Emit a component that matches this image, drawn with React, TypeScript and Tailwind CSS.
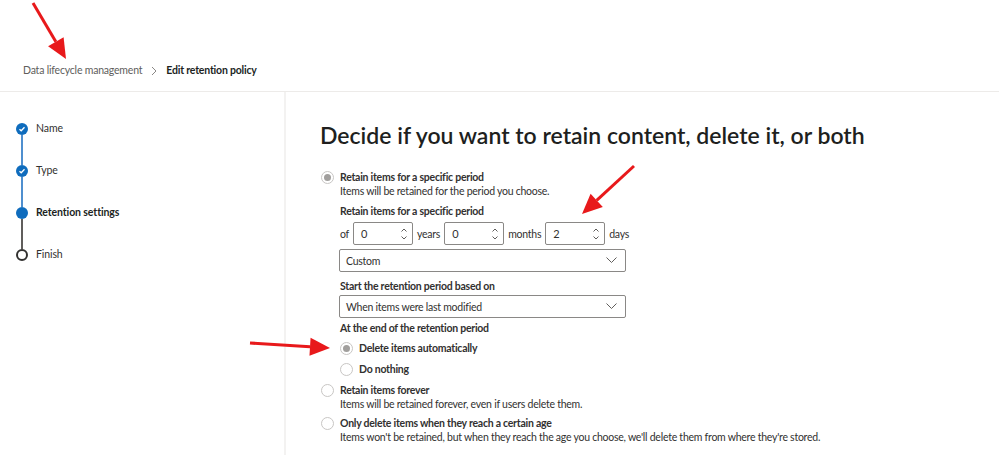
import React from "react";

const font = { fontFamily: 'Lato, "Open Sans", sans-serif' };

function Radio({ checked }: { checked?: boolean }) {
  return (
    <span className="flex h-[13px] w-[13px] shrink-0 items-center justify-center rounded-full border border-[#c8c6c4] bg-white">
      {checked && <span className="h-[7px] w-[7px] rounded-full bg-[#a19f9d]" />}
    </span>
  );
}

function Spin({ value }: { value: string }) {
  return (
    <div className="flex h-[23px] w-[60px] items-center justify-between rounded-[2px] border border-[#8a8886] bg-white pl-[7px] pr-[4px]">
      <span className="text-[11px] text-[#323130]">{value}</span>
      <svg width="8" height="16" viewBox="0 0 8 16" fill="none" stroke="#605e5c" strokeWidth="1">
        <path d="M1.5 5.5 L4 3 L6.5 5.5" />
        <path d="M1.5 10.5 L4 13 L6.5 10.5" />
      </svg>
    </div>
  );
}

function Select({ text }: { text: string }) {
  return (
    <div className="flex h-[23px] w-[287px] items-center justify-between rounded-[2px] border border-[#8a8886] bg-white pl-[6px] pr-[8px]">
      <span className="text-[#323130]">{text}</span>
      <svg width="11" height="7" viewBox="0 0 11 7" fill="none" stroke="#605e5c" strokeWidth="1">
        <path d="M0.5 0.5 L5.5 5.5 L10.5 0.5" />
      </svg>
    </div>
  );
}

function StepDone() {
  return (
    <span className="flex h-[12px] w-[12px] shrink-0 items-center justify-center rounded-full bg-[#0f6cbd]">
      <svg width="8" height="8" viewBox="0 0 8 8" fill="none" stroke="white" strokeWidth="1.3">
        <path d="M1.5 4.2 L3.2 5.8 L6.5 2.3" />
      </svg>
    </span>
  );
}

function Arrow({ x1, y1, x2, y2 }: { x1: number; y1: number; x2: number; y2: number }) {
  const dx = x2 - x1;
  const dy = y2 - y1;
  const len = Math.sqrt(dx * dx + dy * dy);
  const ux = dx / len;
  const uy = dy / len;
  const hl = 20;
  const hw = 9;
  const bx = x2 - ux * hl;
  const by = y2 - uy * hl;
  const p1 = `${bx - uy * hw},${by + ux * hw}`;
  const p2 = `${bx + uy * hw},${by - ux * hw}`;
  return (
    <g>
      <line x1={x1} y1={y1} x2={bx} y2={by} stroke="#e8191b" strokeWidth="3" />
      <polygon points={`${x2},${y2} ${p1} ${p2}`} fill="#e8191b" />
    </g>
  );
}

export default function App() {
  return (
    <div className="relative h-[456px] w-[999px] overflow-hidden bg-white text-[#323130]" style={font}>
      <div className="flex h-[92px] items-end border-b border-[#edebe9] pb-[12px] pl-[23px]">
        <div className="flex items-center text-[10.5px] tracking-[-0.2px]">
          <span className="text-[#605e5c]">Data lifecycle management</span>
          <svg className="mx-[9px]" width="6" height="10" viewBox="0 0 6 10" fill="none" stroke="#8a8886" strokeWidth="1">
            <path d="M1 1 L5 5 L1 9" />
          </svg>
          <span className="font-bold text-[#201f1e]">Edit retention policy</span>
        </div>
      </div>
      <div className="flex h-[363px]">
        <div className="w-[286px] shrink-0 border-r-2 border-[#f3f2f1] pl-[16px] pt-[31px]">
          <div className="flex flex-col text-[10.5px] tracking-[-0.1px]">
            <div className="flex h-[12px] items-center gap-[8px]">
              <StepDone />
              <span>Name</span>
            </div>
            <div className="ml-[5px] h-[30px] w-[2px] bg-[#4f8fcf]" />
            <div className="flex h-[12px] items-center gap-[8px]">
              <StepDone />
              <span>Type</span>
            </div>
            <div className="ml-[5px] h-[30px] w-[2px] bg-[#4f8fcf]" />
            <div className="flex h-[12px] items-center gap-[8px]">
              <span className="h-[12px] w-[12px] shrink-0 rounded-full bg-[#0f6cbd]" />
              <span className="font-bold text-[#201f1e]">Retention settings</span>
            </div>
            <div className="ml-[5px] h-[30px] w-[2px] bg-[#605e5c]" />
            <div className="flex h-[12px] items-center gap-[8px]">
              <span className="h-[12px] w-[12px] shrink-0 rounded-full border-2 border-[#323130]" />
              <span>Finish</span>
            </div>
          </div>
        </div>
        <div className="flex-1 pl-[34px] pt-[28px]">
          <h1 className="text-[23px] font-semibold leading-[30px] text-[#201f1e]">
            Decide if you want to retain content, delete it, or both
          </h1>
          <div className="mt-[20px] flex flex-col text-[10.5px] leading-[14px] tracking-[-0.25px]">
            <div className="flex gap-[6px]">
              <div className="pt-[1px] pl-[1px]"><Radio checked /></div>
              <div className="flex flex-col">
                <span className="font-bold">Retain items for a specific period</span>
                <span>Items will be retained for the period you choose.</span>
                <span className="mt-[6px] font-bold">Retain items for a specific period</span>
                <div className="mt-[4px] flex items-center gap-[4px]">
                  <span>of</span>
                  <Spin value="0" />
                  <span>years</span>
                  <Spin value="0" />
                  <span>months</span>
                  <Spin value="2" />
                  <span>days</span>
                </div>
                <div className="mt-[4px] -ml-[1px]"><Select text="Custom" /></div>
                <span className="mt-[7px] font-bold">Start the retention period based on</span>
                <div className="mt-[2px] -ml-[1px]"><Select text="When items were last modified" /></div>
                <span className="mt-[3px] font-bold">At the end of the retention period</span>
                <div className="mt-[6px] flex items-center gap-[6px]">
                  <Radio checked />
                  <span className="font-bold">Delete items automatically</span>
                </div>
                <div className="mt-[7px] flex items-center gap-[6px]">
                  <Radio />
                  <span className="font-bold">Do nothing</span>
                </div>
              </div>
            </div>
            <div className="mt-[7px] flex gap-[6px]">
              <div className="pt-[1px] pl-[1px]"><Radio /></div>
              <div className="flex flex-col">
                <span className="font-bold">Retain items forever</span>
                <span>Items will be retained forever, even if users delete them.</span>
              </div>
            </div>
            <div className="mt-[5px] flex gap-[6px]">
              <div className="pt-[1px] pl-[1px]"><Radio /></div>
              <div className="flex flex-col">
                <span className="font-bold">Only delete items when they reach a certain age</span>
                <span>Items won't be retained, but when they reach the age you choose, we'll delete them from where they're stored.</span>
              </div>
            </div>
          </div>
        </div>
      </div>
      <svg className="pointer-events-none absolute left-0 top-0" width="999" height="456">
        <Arrow x1={33} y1={3} x2={66} y2={59} />
        <Arrow x1={634} y1={166} x2={582} y2={214} />
        <Arrow x1={250} y1={343} x2={330} y2={348} />
      </svg>
    </div>
  );
}
